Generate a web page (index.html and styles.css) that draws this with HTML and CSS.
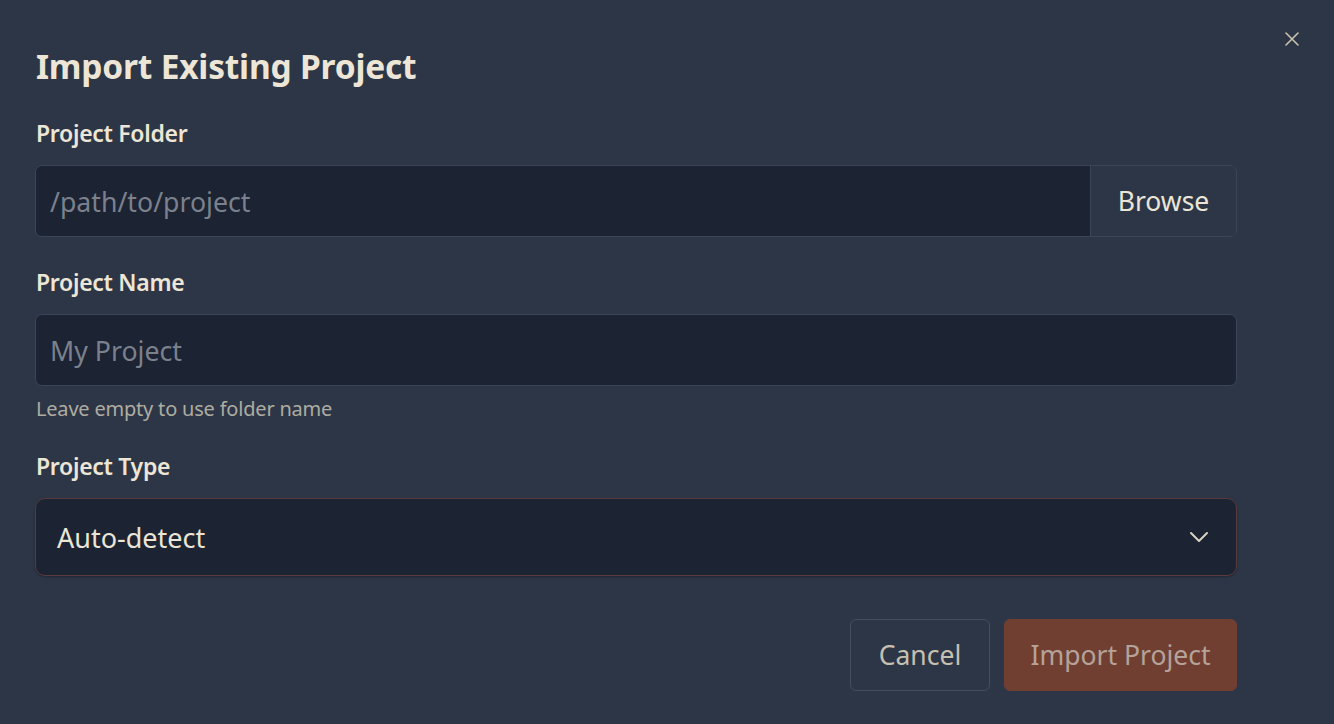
FILE: index.html
```html
<!DOCTYPE html>
<html lang="en">
<head>
<meta charset="utf-8">
<title>Import Existing Project</title>
<link rel="stylesheet" href="styles.css">
</head>
<body>
<div class="dialog">
  <button class="close" aria-label="Close">
    <svg width="16" height="16" viewBox="0 0 16 16"><path d="M2 2 L14 14 M14 2 L2 14" stroke="#c9c3ad" stroke-width="1.6" fill="none" stroke-linecap="round"/></svg>
  </button>
  <h1 class="title">Import Existing Project</h1>

  <div class="field field-folder">
    <label class="label">Project Folder</label>
    <div class="input-group">
      <input class="input grow" type="text" placeholder="/path/to/project">
      <button class="browse">Browse</button>
    </div>
  </div>

  <div class="field field-name">
    <label class="label">Project Name</label>
    <input class="input" type="text" placeholder="My Project">
    <div class="hint">Leave empty to use folder name</div>
  </div>

  <div class="field">
    <label class="label">Project Type</label>
    <div class="select">
      <span class="select-value">Auto-detect</span>
      <svg class="chevron" width="20" height="12" viewBox="0 0 20 12"><path d="M2 2 L10 10 L18 2" stroke="#d8d4c0" stroke-width="2" fill="none" stroke-linecap="round" stroke-linejoin="round"/></svg>
    </div>
  </div>

  <div class="actions">
    <button class="btn cancel">Cancel</button>
    <button class="btn primary">Import Project</button>
  </div>
</div>
</body>
</html>
```

FILE: styles.css
```css
* { box-sizing: border-box; }
html, body { margin: 0; height: 100%; }
body {
  background: #2d3647;
  font-family: "Noto Sans", "Open Sans", sans-serif;
  color: #ebe5d6;
}
.dialog {
  position: relative;
  width: 1334px;
  height: 724px;
  padding: 40px 97px 0 35px;
}
.close {
  position: absolute;
  top: 29px;
  right: 32px;
  width: 20px;
  height: 20px;
  padding: 0;
  border: 0;
  background: none;
  display: flex;
  align-items: center;
  justify-content: center;
}
.title {
  margin: 0 0 26px 1px;
  font-size: 33.5px;
  font-weight: 700;
  line-height: 52px;
  color: #ede6d6;
  letter-spacing: -0.2px;
}
.field { display: flex; flex-direction: column; margin-bottom: 34px; }
.field-folder { margin-bottom: 30px; }
.field-name { margin-bottom: 30px; }
.label {
  font-size: 23px;
  font-weight: 600;
  line-height: 30px;
  margin: 0 0 17px 1px;
  color: #ede6d6;
  letter-spacing: -0.3px;
}
.input-group {
  display: flex;
  height: 72px;
  border: 1px solid #3c4557;
  border-radius: 7px;
  overflow: hidden;
}
.input {
  height: 72px;
  background: #1c2333;
  border: 1px solid #3c4557;
  border-radius: 7px;
  padding: 0 14px;
  font-family: inherit;
  font-size: 26.7px;
  color: #ebe5d6;
  outline: none;
}
.input::placeholder { color: #7b818c; }
.input-group .input {
  height: 70px;
  border: 0;
  border-radius: 0;
  flex: 1;
  min-width: 0;
}
.browse {
  width: 146px;
  background: #2d3647;
  border: 0;
  border-left: 1px solid #3c4557;
  font-family: inherit;
  font-size: 26.5px;
  color: #ebe5d6;
}
.hint {
  margin: 11px 0 0 1px;
  font-size: 20px;
  line-height: 24px;
  color: #aeaca0;
  letter-spacing: -0.2px;
}
.select {
  height: 78px;
  background: #1c2333;
  border: 1px solid #5a3a3c;
  border-radius: 10px;
  display: flex;
  align-items: center;
  justify-content: space-between;
  padding: 0 27px 0 21px;
  box-shadow: 0 1px 2px rgba(0,0,0,0.3);
}
.select-value { font-size: 27px; color: #ebe5d6; }
.actions {
  display: flex;
  justify-content: flex-end;
  gap: 14px;
  margin-top: 43px;
}
.btn {
  height: 72px;
  border-radius: 6px;
  font-family: inherit;
  font-size: 26.5px;
  padding: 0;
  white-space: nowrap;
}
.cancel {
  width: 140px;
  background: transparent;
  border: 1px solid #454e5f;
  color: #c7c0b0;
}
.primary {
  width: 233px;
  background: #713f31;
  border: 1px solid #713f31;
  color: #b5a399;
}
```
